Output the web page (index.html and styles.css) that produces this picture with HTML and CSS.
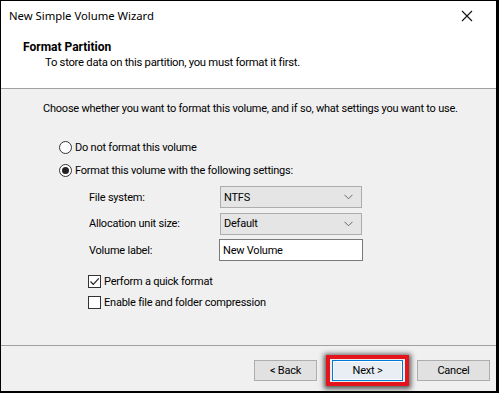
FILE: index.html
```html
<!DOCTYPE html>
<html>
<head>
<meta charset="utf-8">
<link rel="stylesheet" href="styles.css">
</head>
<body>
<div class="window">
  <div class="titlebar">
    <span class="title">New Simple Volume Wizard</span>
    <svg class="close" width="12" height="12" viewBox="0 0 12 12"><path d="M1 1 L11 11 M11 1 L1 11" stroke="#111" stroke-width="1.1" fill="none"/></svg>
  </div>
  <div class="header">
    <div class="h-title">Format Partition</div>
    <div class="h-sub">To store data on this partition, you must format it first.</div>
  </div>
  <div class="content">
    <div class="intro">Choose whether you want to format this volume, and if so, what settings you want to use.</div>
    <div class="radio-row first"><span class="radio"></span><span>Do not format this volume</span></div>
    <div class="radio-row"><span class="radio on"></span><span>Format this volume with the following settings:</span></div>
    <div class="field f1">
      <span class="label">File system:</span>
      <div class="select"><span>NTFS</span><svg width="9" height="6" viewBox="0 0 9 6"><path d="M0.5 0.8 L4.5 4.8 L8.5 0.8" stroke="#666" stroke-width="1" fill="none"/></svg></div>
    </div>
    <div class="field">
      <span class="label">Allocation unit size:</span>
      <div class="select"><span>Default</span><svg width="9" height="6" viewBox="0 0 9 6"><path d="M0.5 0.8 L4.5 4.8 L8.5 0.8" stroke="#666" stroke-width="1" fill="none"/></svg></div>
    </div>
    <div class="field">
      <span class="label">Volume label:</span>
      <div class="textbox">New Volume</div>
    </div>
    <div class="check-row c1"><span class="check"><svg width="11" height="11" viewBox="0 0 11 11"><path d="M1.5 5.5 L4.3 8.3 L9.8 2.3" stroke="#222" stroke-width="1.2" fill="none"/></svg></span><span>Perform a quick format</span></div>
    <div class="check-row"><span class="check"></span><span>Enable file and folder compression</span></div>
  </div>
  <div class="footer">
    <div class="btn back">&lt; Back</div>
    <div class="next-wrap"><div class="btn next">Next &gt;</div></div>
    <div class="btn cancel">Cancel</div>
  </div>
</div>
</body>
</html>
```
FILE: styles.css
```css
* { box-sizing: border-box; }
html, body { margin: 0; padding: 0; }
body {
  width: 499px;
  height: 393px;
  overflow: hidden;
  font-family: Roboto, "Noto Sans", sans-serif;
  font-size: 11px;
  letter-spacing: -0.22px;
  color: #000;
}
.window {
  width: 499px;
  height: 393px;
  border-top: 1px solid #000;
  border-left: 1px solid #000;
  border-right: 3px solid #000;
  border-bottom: 2px solid #000;
  background: #f0f0f0;
  display: flex;
  flex-direction: column;
}
.titlebar {
  height: 29px;
  background: #fff;
  display: flex;
  align-items: center;
  justify-content: space-between;
  padding: 0 23px 0 8px;
}
.title {
  line-height: 15px;
  font-family: "Noto Sans", sans-serif;
  font-size: 11.3px;
  letter-spacing: 0;
}
.close { display: block; }
.header {
  background: #fff;
  padding: 10px 0 18px 22px;
  border-bottom: 1px solid #a0a0a0;
  line-height: 15px;
}
.h-title { font-weight: bold; font-size: 12px; letter-spacing: 0; }
.h-sub { padding-left: 22px; font-size: 11.3px; letter-spacing: -0.28px; }
.content {
  flex: 1;
  padding: 12px 0 0 42px;
  line-height: 15px;
  border-bottom: 1px solid #a0a0a0;
}
.radio-row {
  display: flex;
  align-items: center;
  gap: 3px;
  margin-left: 16px;
  height: 23px;
}
.radio-row.first { margin-top: 20px; }
.radio {
  width: 13px;
  height: 13px;
  border: 1px solid #333;
  border-radius: 50%;
  background: #fff;
  display: flex;
  align-items: center;
  justify-content: center;
}
.radio.on::after {
  content: "";
  width: 7px;
  height: 7px;
  border-radius: 50%;
  background: #222;
}
.field {
  display: flex;
  align-items: center;
  margin-left: 46px;
  height: 26.5px;
}
.field.f1 { margin-top: 2px; }
.label { width: 131px; }
.select {
  width: 142px;
  height: 22px;
  background: #e5e5e5;
  border: 1px solid #adadad;
  display: flex;
  align-items: center;
  justify-content: space-between;
  padding: 0 8px 0 3px;
}
.textbox {
  width: 144px;
  height: 22px;
  margin-left: -1px;
  background: #fff;
  border: 1px solid #7a7a7a;
  display: flex;
  align-items: center;
  padding-left: 3px;
}
.check-row {
  display: flex;
  align-items: center;
  gap: 3px;
  margin-left: 45px;
  height: 21px;
}
.check-row.c1 { margin-top: 7px; }
.check {
  width: 13px;
  height: 13px;
  border: 1px solid #333;
  background: #fff;
  display: flex;
  align-items: center;
  justify-content: center;
}
.check svg { display: block; }
.footer {
  height: 45px;
  display: flex;
  align-items: center;
  padding: 4px 0 0 253px;
}
.btn {
  height: 21px;
  background: #e1e1e1;
  border: 1px solid #adadad;
  display: flex;
  align-items: center;
  justify-content: center;
}
.back { width: 63px; }
.next-wrap {
  margin-left: 9px;
  border: 4px solid #e3141b;
  padding: 1px 2px;
  box-shadow: 0 1px 5px 2px rgba(40,40,40,0.75);
}
.next {
  width: 71px;
  border: 1px solid #0078d7;
  box-shadow: inset 0 0 0 1px #fff;
  background: #e8eef4;
}
.cancel { width: 73px; margin-left: 8px; }
```
